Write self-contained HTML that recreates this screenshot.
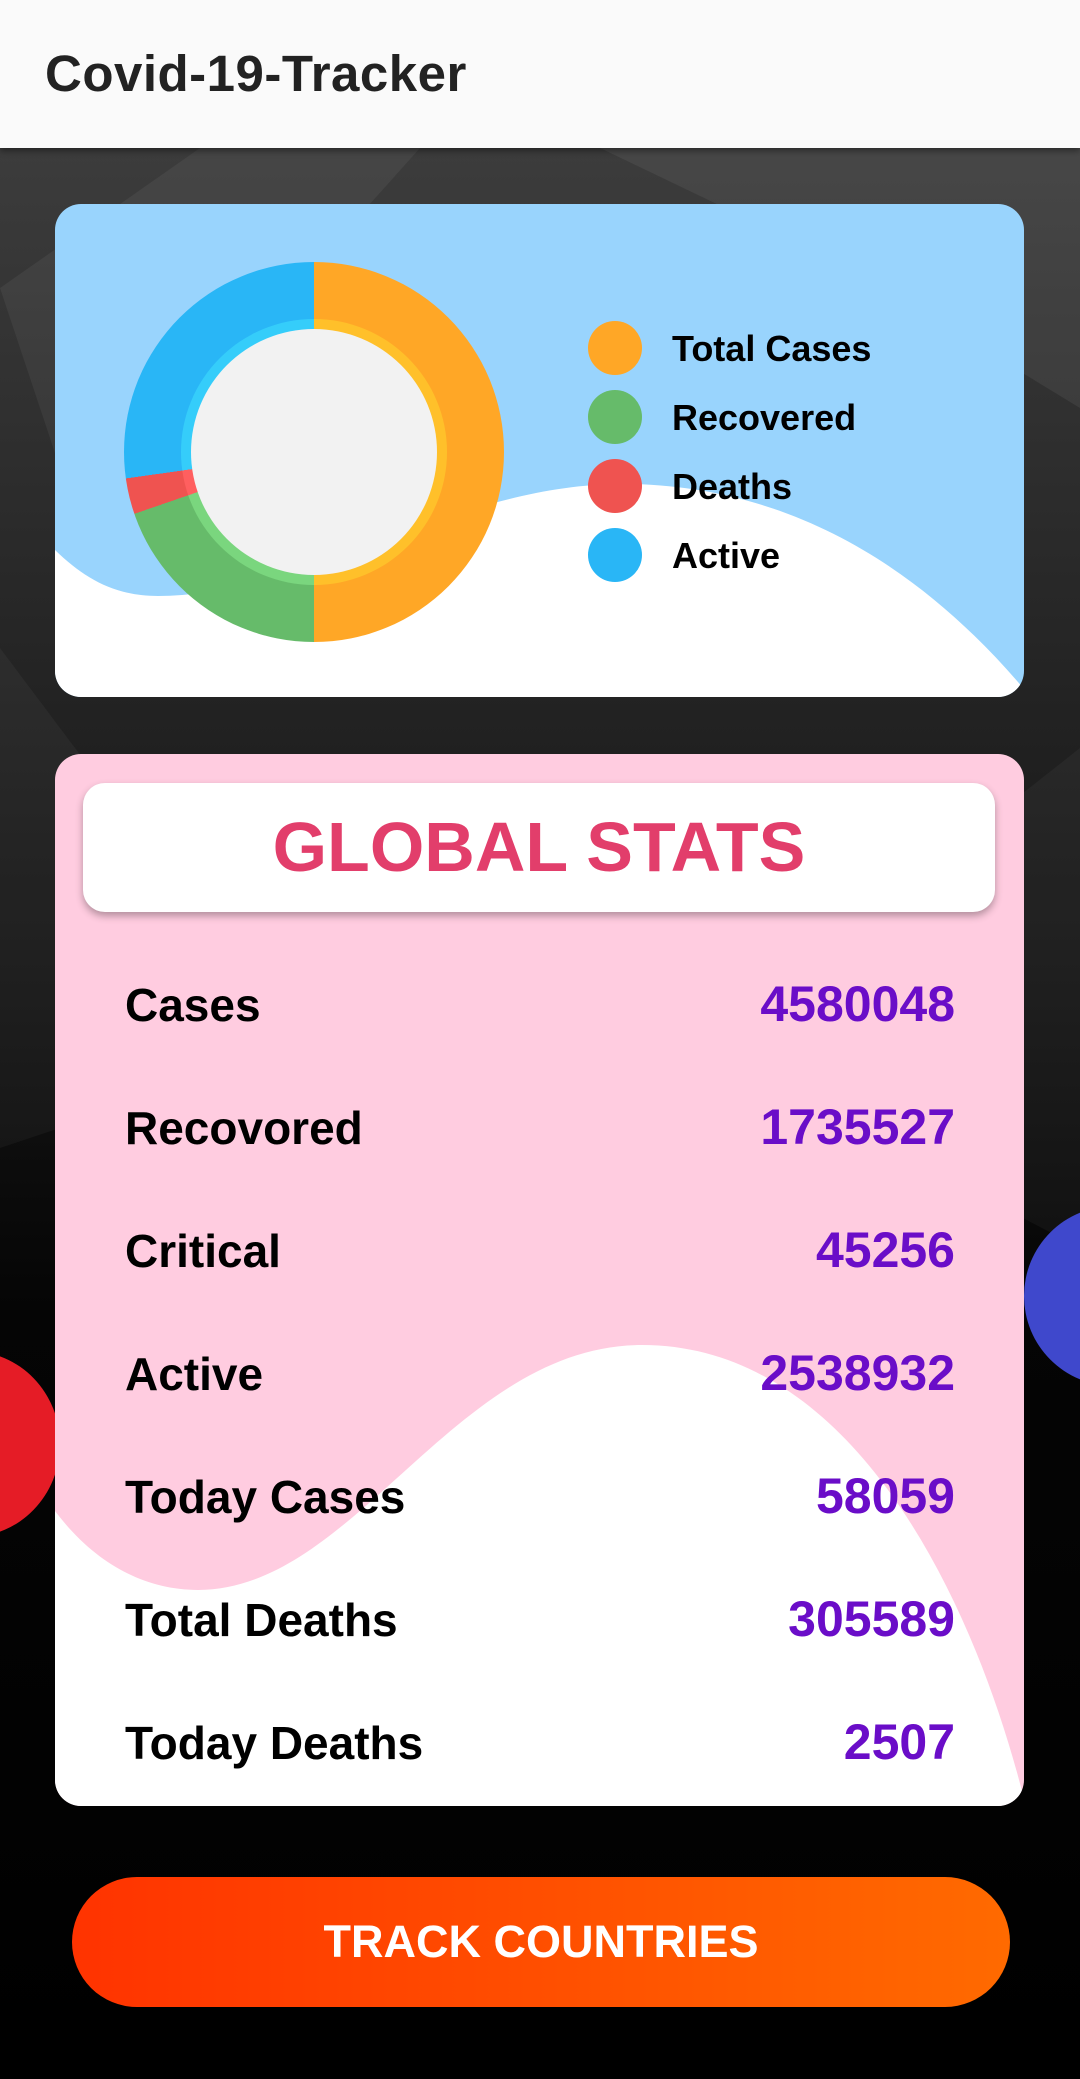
<!DOCTYPE html>
<html><head><meta charset="utf-8"><style>
*{margin:0;padding:0;box-sizing:border-box}
body{width:1080px;height:2079px;overflow:hidden;font-family:"Liberation Sans",Roboto,sans-serif;background:#000;position:relative}
.bg{position:absolute;left:0;top:148px;width:1080px;height:1931px;background:linear-gradient(180deg,#3c3c3c 0%,#262626 25%,#141414 45%,#050505 60%,#000 100%)}
.bar{position:absolute;left:0;top:0;width:1080px;height:148px;background:#fafafa;box-shadow:0 3px 6px rgba(0,0,0,.4);z-index:3}
.bar h1{position:absolute;left:45px;top:44px;font-size:51px;font-weight:700;color:#222;letter-spacing:0.5px}
.card{position:absolute;left:55px;width:969px;border-radius:26px;overflow:hidden}
.c1{top:204px;height:493px;background:#99d4fd}
.c2{top:754px;height:1052px;background:#ffcce0}
.legend{position:absolute;left:500px;width:420px;height:54px}
.legend i{position:absolute;left:33px;top:0;width:54px;height:54px;border-radius:50%}
.legend span{position:absolute;left:117px;top:7px;font-size:36px;font-weight:700;color:#000}
.hdr{position:absolute;left:28px;top:29px;width:912px;height:129px;background:#fff;border-radius:22px;box-shadow:0 4px 8px rgba(0,0,0,.3);text-align:center;font-size:70px;font-weight:700;color:#e23e6b;line-height:129px}
.row{position:absolute;left:70px;width:830px;font-size:46px;color:#000;height:60px}
.row b{position:absolute;right:0;top:-3px;color:#6a0dc8;font-weight:700;font-size:50px;letter-spacing:0}
.row span{font-weight:700}
.btn{position:absolute;left:72px;top:1877px;width:938px;height:130px;border-radius:65px;background:linear-gradient(90deg,#ff3300,#ff6a00);color:#fff;text-align:center;line-height:130px;font-size:45px;font-weight:700}
</style></head><body>
<div class="bg">
<svg width="1080" height="1931" style="position:absolute;left:0;top:0">
<polygon points="0,140 200,0 420,0 80,380" fill="#ffffff" opacity=".05"/>
<polygon points="600,0 1080,0 1080,260 850,120" fill="#ffffff" opacity=".06"/>
<polygon points="0,500 300,900 0,1000" fill="#ffffff" opacity=".04"/>
<polygon points="1080,600 700,900 1080,1100" fill="#ffffff" opacity=".04"/>
</svg>
</div>
<div style="position:absolute;left:-120px;top:1351px;width:180px;height:186px;border-radius:50%;background:#e51c26"></div>
<div style="position:absolute;left:1024px;top:1206px;width:180px;height:180px;border-radius:50%;background:#3f48cc"></div>
<div class="bar"><h1>Covid-19-Tracker</h1></div>

<div class="card c1">
<svg width="969" height="493" style="position:absolute;left:0;top:0">
<path d="M0,346 C30,375 60,392 103,392 C250,392 400,280 567,280 C750,280 880,380 969,485 L969,493 L0,493 Z" fill="#fff"/>
</svg>
<div style="position:absolute;left:69px;top:58px;width:380px;height:380px;border-radius:50%;background:conic-gradient(#ffa726 0deg 180deg,#66bb6a 180deg 251deg,#ef5350 251deg 262deg,#29b6f6 262deg 360deg)"></div>
<div style="position:absolute;left:126px;top:115px;width:266px;height:266px;border-radius:50%;background:conic-gradient(#ffc02a 0deg 180deg,#7ad67e 180deg 251deg,#ff5f5f 251deg 262deg,#35cdfa 262deg 360deg)"></div>
<div style="position:absolute;left:136px;top:125px;width:246px;height:246px;border-radius:50%;background:#f2f2f2"></div>
<div class="legend" style="top:117px"><i style="background:#ffa726"></i><span>Total Cases</span></div>
<div class="legend" style="top:186px"><i style="background:#66bb6a"></i><span>Recovered</span></div>
<div class="legend" style="top:255px"><i style="background:#ef5350"></i><span>Deaths</span></div>
<div class="legend" style="top:324px"><i style="background:#29b6f6"></i><span>Active</span></div>
</div>

<div class="card c2">
<svg width="969" height="1052" style="position:absolute;left:0;top:0">
<path d="M0,757 C40,810 90,836 143,836 C300,836 400,591 587,591 C800,591 920,850 969,1045 L969,1052 L0,1052 Z" fill="#fff"/>
</svg>
<div class="hdr">GLOBAL STATS</div>
<div class="row" style="top:224px"><span>Cases</span><b>4580048</b></div>
<div class="row" style="top:347px"><span>Recovored</span><b>1735527</b></div>
<div class="row" style="top:470px"><span>Critical</span><b>45256</b></div>
<div class="row" style="top:593px"><span>Active</span><b>2538932</b></div>
<div class="row" style="top:716px"><span>Today Cases</span><b>58059</b></div>
<div class="row" style="top:839px"><span>Total Deaths</span><b>305589</b></div>
<div class="row" style="top:962px"><span>Today Deaths</span><b>2507</b></div>
</div>

<div class="btn">TRACK COUNTRIES</div>
</body></html>
